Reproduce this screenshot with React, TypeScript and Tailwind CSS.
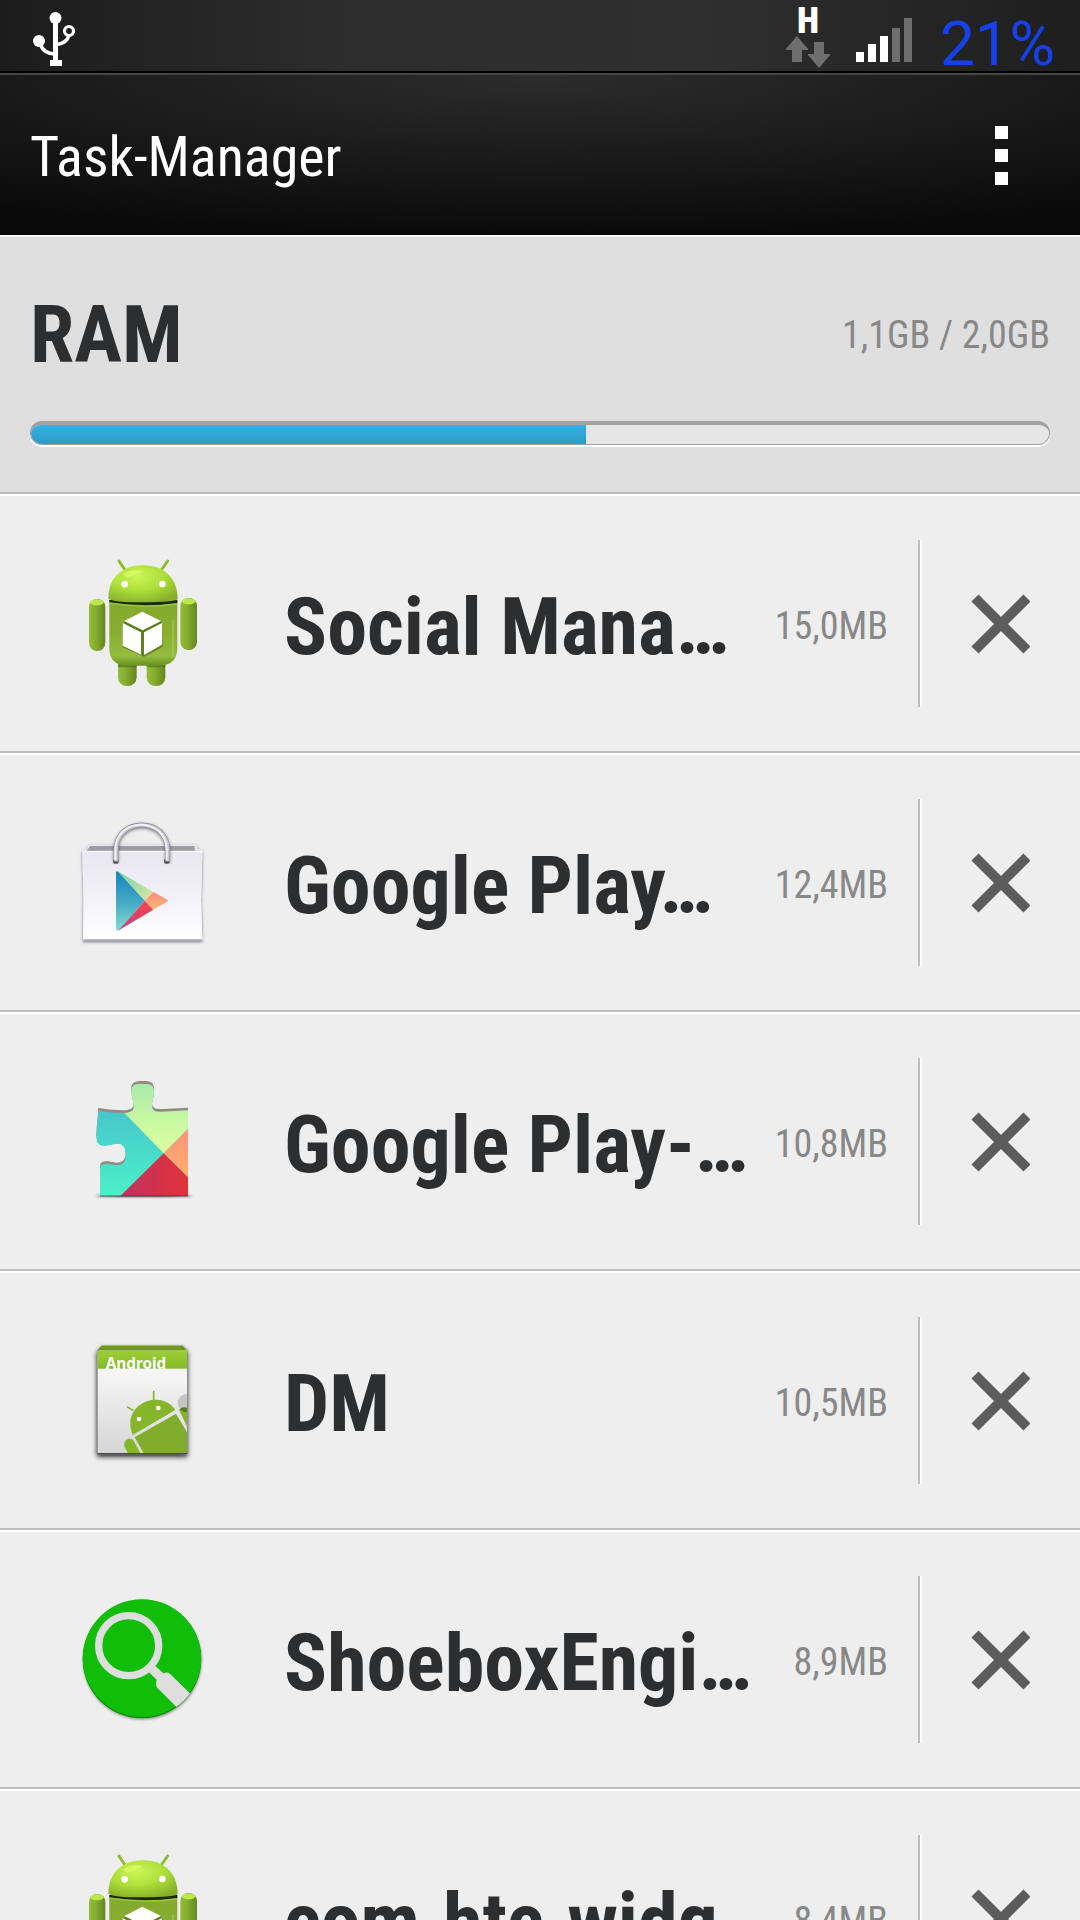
import React from "react";

const CONDENSED = "font-['Roboto_Condensed','Liberation_Sans_Narrow',Roboto,sans-serif]";

type IconName = "android" | "store" | "puzzle" | "package" | "search";

interface Task {
  id: number;
  name: string;
  size: string;
  icon: IconName;
}

const tasks: Task[] = [
  { id: 1, name: "Social Mana…", size: "15,0MB", icon: "android" },
  { id: 2, name: "Google Play…", size: "12,4MB", icon: "store" },
  { id: 3, name: "Google Play-…", size: "10,8MB", icon: "puzzle" },
  { id: 4, name: "DM", size: "10,5MB", icon: "package" },
  { id: 5, name: "ShoeboxEngi…", size: "8,9MB", icon: "search" },
  { id: 6, name: "com.htc.widg…", size: "8,4MB", icon: "android" },
];

function AndroidIcon({ id }: { id: number }) {
  const head = `head-${id}`;
  const body = `body-${id}`;
  const limb = `limb-${id}`;
  return (
    <svg viewBox="0 0 540 501" className="w-[180px] h-[167px] shrink-0" aria-hidden="true">
      <defs>
        <radialGradient id={head} cx="0.42" cy="0.3" r="0.75">
          <stop offset="0" stopColor="#cdf55a" />
          <stop offset="0.5" stopColor="#aee03a" />
          <stop offset="1" stopColor="#86b029" />
        </radialGradient>
        <linearGradient id={body} x1="0" y1="0" x2="0" y2="1">
          <stop offset="0" stopColor="#83a92c" />
          <stop offset="0.5" stopColor="#88ad32" />
          <stop offset="0.85" stopColor="#94bd3c" />
          <stop offset="1" stopColor="#6c9128" />
        </linearGradient>
        <linearGradient id={limb} x1="0" y1="0" x2="1" y2="0">
          <stop offset="0" stopColor="#93bd38" />
          <stop offset="0.4" stopColor="#86ae30" />
          <stop offset="1" stopColor="#64861f" />
        </linearGradient>
      </defs>
      <path d="M177 63l18 27M323 63l-19 27" stroke="#8fbb30" strokeWidth="9" strokeLinecap="round" />
      <rect x="174" y="355" width="56" height="83" rx="26" fill={`url(#${limb})`} />
      <rect x="260" y="355" width="56" height="83" rx="26" fill={`url(#${limb})`} />
      <path d="M174 372H230V382H174ZM260 372H316V382H260Z" fill="#4d6a18" opacity="0.6" />
      <rect x="87" y="177" width="49" height="156" rx="24" fill={`url(#${limb})`} />
      <rect x="361" y="174" width="50" height="156" rx="24" fill={`url(#${limb})`} />
      <ellipse cx="111" cy="187" rx="20" ry="9" fill="#b9e94a" />
      <ellipse cx="386" cy="184" rx="20" ry="9" fill="#b9e94a" />
      <path d="M148 180H352V325Q352 377 295 377H204Q148 377 148 325Z" fill={`url(#${body})`} />
      <path d="M148 180H352V189Q250 203 148 187Z" fill="#1d2a08" />
      <path d="M150 190Q250 206 350 192" stroke="#9cc740" strokeWidth="4" fill="none" />
      <path d="M145 176C145 115 185 76 249 76S353 115 353 178Q340 187 249 187T145 176Z" fill={`url(#${head})`} />
      <path d="M190 103Q215 84 250 94Q225 106 210 110Q195 115 190 103Z" fill="#e6ff70" opacity="0.6" />
      <circle cx="194" cy="133" r="10" fill="#fff" />
      <circle cx="307" cy="132" r="10" fill="#fff" />
      <path d="M339 240V352" stroke="#a9cf5c" strokeWidth="7" opacity="0.5" />
      <path d="M247 220L305 245L308 320L252 350L188 322V250Z" fill="#4f6f16" opacity="0.75" />
      <path d="M247 215L303 243L248 271L193 243Z" fill="#fff" />
      <path d="M188 249L243 277V344L188 317Z" fill="#fff" />
      <path d="M306 249L252 277V345L306 314Z" fill="#fff" />
    </svg>
  );
}

function StoreIcon() {
  return (
    <svg viewBox="0 -3 540 501" className="w-[180px] h-[167px] shrink-0" aria-hidden="true">
      <defs>
        <linearGradient id="bag" x1="0" y1="0" x2="0" y2="1">
          <stop offset="0" stopColor="#e9e8f2" />
          <stop offset="0.55" stopColor="#f3f2f9" />
          <stop offset="1" stopColor="#ffffff" />
        </linearGradient>
        <linearGradient id="playBlue" x1="0" y1="0" x2="0" y2="1">
          <stop offset="0" stopColor="#1686bd" />
          <stop offset="0.5" stopColor="#41a7c4" />
          <stop offset="1" stopColor="#82dfd0" />
        </linearGradient>
        <linearGradient id="playGreen" x1="0" y1="0" x2="1" y2="1">
          <stop offset="0" stopColor="#73cfae" />
          <stop offset="1" stopColor="#dfe89f" />
        </linearGradient>
        <linearGradient id="playRed" x1="0" y1="1" x2="1" y2="0">
          <stop offset="0" stopColor="#a94ba5" />
          <stop offset="0.6" stopColor="#e3435f" />
          <stop offset="1" stopColor="#fb4350" />
        </linearGradient>
        <linearGradient id="playOrange" x1="0" y1="0" x2="0" y2="1">
          <stop offset="0" stopColor="#ff8a76" />
          <stop offset="1" stopColor="#fdbb79" />
        </linearGradient>
        <filter id="bagShadow" x="-10%" y="-10%" width="120%" height="120%">
          <feDropShadow dx="0" dy="3" stdDeviation="4" floodColor="#000" floodOpacity="0.5" />
        </filter>
      </defs>
      <g filter="url(#bagShadow)">
        <path d="M84 134H411L413 148L427 153L423 300L427 423H69L71 300L67 153L82 148Z" fill="#e5e5ea" />
        <path d="M90 138H403L405 153H80Z" fill="#9d9da5" />
        <path d="M67 153H427L423 300L426 419H70L71 300Z" fill="url(#bag)" />
      </g>
      <path d="M67 154H427" stroke="#fbfbff" strokeWidth="3" />
      <path d="M70 421H426" stroke="#a9a7c4" strokeWidth="6" />
      <rect x="159" y="176" width="17" height="15" rx="5" fill="#66666e" />
      <rect x="312" y="176" width="17" height="15" rx="5" fill="#66666e" />
      <g fill="none">
        <path
          d="M168 184V150C168 50 323 50 323 150V184"
          stroke="#8a8a94"
          strokeWidth="15"
          filter="url(#bagShadow)"
        />
        <path d="M168 184V150C168 50 323 50 323 150V184" stroke="#c6c6d2" strokeWidth="11" />
        <path d="M166 180V150C166 49 320 49 320 150V180" stroke="#f1f1f7" strokeWidth="6" />
      </g>
      <path d="M168 217Q169 212 175 215L255 302L176 391Q169 395 168 388Z" fill="url(#playBlue)" />
      <path d="M173 214L280 276L255 302Z" fill="url(#playGreen)" />
      <path d="M255 302L280 329L174 392Z" fill="url(#playRed)" />
      <path d="M280 276L322 299Q326 302 322 305L280 329L255 302Z" fill="url(#playOrange)" />
    </svg>
  );
}

function PuzzleIcon() {
  const piece =
    "M84 152Q125 159 165 159C184 157 190 151 191 141C191 120 184 110 184 92C184 76 195 71 218 71S252 76 252 94C252 112 246 122 246 140C248 153 258 156 277 155L354 151V408H90V330C89 315 97 312 110 311L140 316C162 316 168 302 167 285C166 260 158 251 141 251L105 258C88 258 79 250 79 232C79 205 85 180 84 152Z";
  return (
    <svg viewBox="-30 -6 540 501" className="w-[180px] h-[167px] shrink-0" aria-hidden="true">
      <defs>
        <clipPath id="piece">
          <path d={piece} />
        </clipPath>
        <linearGradient id="pTeal" x1="0" y1="0" x2="0" y2="1">
          <stop offset="0" stopColor="#46b8cc" />
          <stop offset="1" stopColor="#4bf0c8" />
        </linearGradient>
        <linearGradient id="pGreen" x1="0" y1="0" x2="0" y2="1">
          <stop offset="0" stopColor="#a5e8ab" />
          <stop offset="0.55" stopColor="#c8f8a2" />
          <stop offset="1" stopColor="#deff9e" />
        </linearGradient>
        <linearGradient id="pRed" x1="0" y1="0" x2="1" y2="0">
          <stop offset="0" stopColor="#bd3161" />
          <stop offset="1" stopColor="#e2323a" />
        </linearGradient>
        <linearGradient id="pOrange" x1="0" y1="0" x2="0" y2="1">
          <stop offset="0" stopColor="#ff927a" />
          <stop offset="1" stopColor="#ffb06c" />
        </linearGradient>
        <filter id="soft" x="-10%" y="-200%" width="120%" height="500%">
          <feGaussianBlur stdDeviation="3" />
        </filter>
      </defs>
      <ellipse cx="222" cy="408" rx="145" ry="3" fill="#444" filter="url(#soft)" />
      <path d={piece} transform="translate(0 -8)" fill="#958981" />
      <g clipPath="url(#piece)">
        <rect x="70" y="60" width="290" height="350" fill="url(#pTeal)" />
        <path d="M164 160L120 60H360V200L281 280Z" fill="url(#pGreen)" />
        <path d="M281 280L354 207V352Z" fill="url(#pOrange)" />
        <path d="M281 280L354 352V410H149Z" fill="url(#pRed)" />
      </g>
      <path d="M90 408H354" stroke="#2a2a2a" strokeWidth="2" />
    </svg>
  );
}

function PackageIcon() {
  return (
    <svg viewBox="-30 -9 540 501" className="w-[180px] h-[167px] shrink-0" aria-hidden="true">
      <defs>
        <linearGradient id="paper" x1="0" y1="0" x2="0" y2="1">
          <stop offset="0" stopColor="#ffffff" />
          <stop offset="1" stopColor="#d5d5d5" />
        </linearGradient>
        <linearGradient id="band" x1="0" y1="0" x2="0" y2="1">
          <stop offset="0" stopColor="#9ccf33" />
          <stop offset="1" stopColor="#86b92c" />
        </linearGradient>
        <filter id="boxShadow" x="-15%" y="-10%" width="130%" height="125%">
          <feDropShadow dx="0" dy="7" stdDeviation="8" floodColor="#000" floodOpacity="0.9" />
        </filter>
        <clipPath id="front">
          <rect x="83" y="92" width="268" height="307" />
        </clipPath>
      </defs>
      <path d="M95 77H338L352 92V403H81V92Z" fill="#777" filter="url(#boxShadow)" />
      <path d="M95 77H338L352 92H81Z" fill="#6d9a1d" />
      <rect x="83" y="92" width="268" height="307" fill="url(#paper)" />
      <rect x="83" y="92" width="268" height="54" fill="url(#band)" />
      <g clipPath="url(#front)">
        <text x="107" y="147" fontSize="46" fontWeight="700" fill="#fff" fontFamily="'Noto Sans','Open Sans',sans-serif">
          Android
        </text>
        <circle cx="350" cy="249" r="27" fill="#c4c4c4" />
        <path d="M251 213V240M171 260L190 272" stroke="#84b52b" strokeWidth="5" />
        <path d="M188 345C166 290 198 249 245 240C275 235 305 249 316 270Z" fill="#84b52b" />
        <path d="M194 352L318 281L372 372V399H221Z" fill="#80ad2b" />
        <path d="M163 378C160 360 178 350 190 361L214 405H176Z" fill="#84b52b" />
        <path d="M327 270Q340 262 353 266V323Z" fill="#84b52b" />
        <path d="M328 268Q340 278 353 277V264Q340 258 328 268Z" fill="#587c20" />
        <circle cx="207" cy="297" r="7" fill="#fff" />
        <circle cx="265" cy="264" r="7" fill="#fff" />
      </g>
      <path d="M83 401H351" stroke="#4a4a4a" strokeWidth="4" />
    </svg>
  );
}

function SearchIcon() {
  return (
    <svg viewBox="0 -12 540 501" className="w-[180px] h-[167px] shrink-0" aria-hidden="true">
      <defs>
        <clipPath id="disc">
          <circle cx="246" cy="236" r="178" />
        </clipPath>
        <filter id="discShadow" x="-10%" y="-10%" width="120%" height="120%">
          <feDropShadow dx="1" dy="4" stdDeviation="3" floodColor="#000" floodOpacity="0.4" />
        </filter>
      </defs>
      <circle cx="246" cy="237" r="178" fill="#0d8a07" filter="url(#discShadow)" />
      <g clipPath="url(#disc)">
        <circle cx="246" cy="233" r="178" fill="#10bd08" />
        <circle cx="206" cy="197" r="90" fill="none" stroke="#dedede" strokeWidth="22" />
        <path d="M266 276L286 258L310 280Q322 275 330 281L400 350L362 394L293 325Q285 317 290 299Z" fill="#dedede" />
      </g>
    </svg>
  );
}

function TaskIcon({ task }: { task: Task }) {
  switch (task.icon) {
    case "store":
      return <StoreIcon />;
    case "puzzle":
      return <PuzzleIcon />;
    case "package":
      return <PackageIcon />;
    case "search":
      return <SearchIcon />;
    default:
      return <AndroidIcon id={task.id} />;
  }
}

function StatusBar() {
  return (
    <div className="h-[73px] shrink-0 flex items-start justify-between pl-8 pr-[25px] border-b-2 border-black bg-[linear-gradient(90deg,#1c1c1c,#2c2c2c_30%,#2f2f2f_65%,#1e1e1e)]">
      <svg viewBox="0 0 44 71" className="w-11 h-[71px]" fill="none" stroke="#fff" aria-label="USB">
        <path d="M23.500 18V62" strokeWidth="5" />
        <path d="M18 60H30V66H18Z" fill="#fff" stroke="none" />
        <circle cx="23.500" cy="18" r="6" fill="#fff" stroke="none" />
        <circle cx="7" cy="41" r="6" fill="#fff" stroke="none" />
        <path d="M8 44Q12 54 23 54M25 44.500Q35 43 37 35" strokeWidth="3.500" />
        <circle cx="37" cy="31" r="4.500" strokeWidth="3.200" />
      </svg>
      <div className="flex items-start">
        <div className="w-11 flex flex-col items-center pt-1.5">
          <span className={`${CONDENSED} text-[36px] leading-[30px] font-black text-white`}>H</span>
          <svg viewBox="0 0 44 32" className="w-11 h-8" fill="#6e6e6e" aria-hidden="true">
            <path d="M11 0L22 13V14H16V26H6V14H0V13Z" />
            <path d="M28 6H38V18H44V19L33 32L22 19V18H28Z" />
          </svg>
        </div>
        <svg viewBox="0 0 56 71" className="w-14 h-[71px] ml-[26px]" fill="#fff" aria-label="Signal">
          <rect x="0" y="52" width="8" height="10" />
          <rect x="12" y="44" width="8" height="18" />
          <rect x="24" y="36" width="8" height="26" />
          <rect x="36" y="28" width="8" height="34" fill="#6e6e6e" />
          <rect x="48" y="18" width="8" height="44" fill="#6e6e6e" />
        </svg>
        <span className="ml-7 pt-2 font-[Roboto,sans-serif] text-[62px] leading-[72px] text-[#1641e8]">21%</span>
      </div>
    </div>
  );
}

function TitleBar() {
  return (
    <header className="h-[162px] shrink-0 flex items-center justify-between pl-[30px] border-t-2 border-[#454545] bg-[radial-gradient(ellipse_90%_100%_at_50%_0%,#2c2c2c,#1b1b1b_50%,#0a0a0a)]">
      <h1 className={`${CONDENSED} pt-1 text-[56px] leading-[72px] text-white`}>Task-Manager</h1>
      <button aria-label="Menu" className="w-[158px] h-full flex flex-col items-center justify-center gap-[10px]">
        <span className="size-[13px] bg-white" />
        <span className="size-[13px] bg-white" />
        <span className="size-[13px] bg-white" />
      </button>
    </header>
  );
}

function RamPanel({ used, total, label }: { used: number; total: number; label: string }) {
  return (
    <section className="h-[259px] shrink-0 bg-[#dfdfdf] border-t-2 border-t-[#f4f4f4] border-b-2 border-b-[#b9b9b9] px-[30px] pt-[50px]">
      <div className="flex items-center justify-between">
        <h2 className={`${CONDENSED} text-[80px] leading-[96px] font-bold text-[#2d2e30]`}>RAM</h2>
        <span className={`${CONDENSED} text-[38px] leading-[48px] text-[#888]`}>{label}</span>
      </div>
      <div
        role="progressbar"
        aria-label="RAM"
        aria-valuenow={used}
        aria-valuemax={total}
        className="mt-[38px] h-6 rounded-full overflow-hidden bg-[#e6e6e6] border-t-4 border-x border-b border-[#a1a1a1] shadow-[0_2px_0_#fff]"
      >
        <div
          className="h-full bg-linear-to-b from-[#34b3e4] to-[#2d9ac6]"
          style={{ width: `${(used / total) * 100}%` }}
        />
      </div>
    </section>
  );
}

function TaskRow({ task }: { task: Task }) {
  return (
    <li className="h-[259px] shrink-0 flex items-center pl-[60px] bg-[#eee] border-t-2 border-t-white border-b-2 border-b-[#bebebe]">
      <TaskIcon task={task} />
      <span className={`${CONDENSED} flex-1 min-w-0 pl-11 pt-1.5 text-[80px] leading-[96px] font-bold text-[#2d2e30] whitespace-nowrap`}>
        {task.name}
      </span>
      <span className={`${CONDENSED} pt-1 pr-[30px] text-[38px] leading-[48px] text-[#888]`}>{task.size}</span>
      <button
        aria-label={`Stop ${task.name}`}
        className="w-[162px] h-[167px] shrink-0 flex items-center justify-center border-l-2 border-[#bebebe] shadow-[inset_2px_0_0_#fff]"
      >
        <svg viewBox="0 0 60 60" className="size-[60px]" stroke="#5c5c5c" strokeWidth="10" aria-hidden="true">
          <path d="M5 4L57 56M57 4L5 56" />
        </svg>
      </button>
    </li>
  );
}

export default function App() {
  return (
    <main className="h-screen overflow-hidden flex flex-col bg-[#eee]">
      <StatusBar />
      <TitleBar />
      <RamPanel used={1.09} total={2} label="1,1GB / 2,0GB" />
      <ul>
        {tasks.map((task) => (
          <TaskRow key={task.id} task={task} />
        ))}
      </ul>
    </main>
  );
}
